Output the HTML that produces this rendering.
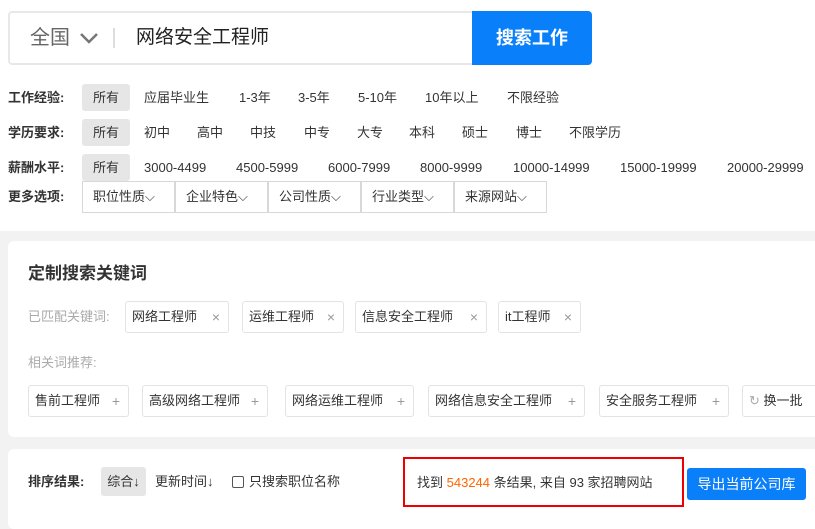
<!DOCTYPE html>
<html><head><meta charset="utf-8"><style>
*{margin:0;padding:0;box-sizing:border-box}
body{width:815px;height:511px;overflow:hidden;background:#f2f2f2;font-family:"Liberation Sans","Noto Sans CJK SC",sans-serif;position:relative;color:#333;line-height:16px}
.a{position:absolute;white-space:nowrap}
.top{position:absolute;left:0;top:0;width:815px;height:231px;background:#fff}
.lbl{font-size:13px;font-weight:bold;color:#333}
.o{font-size:13px;color:#333}
.chip{position:absolute;background:#e6e6e6;border-radius:3px;font-size:13px;color:#333;text-align:center}
.card{position:absolute;background:#fff;border-radius:6px}
.tag{position:absolute;border:1px solid #e3e3e3;border-radius:3px;font-size:13px;color:#333;height:32px;line-height:30px;padding-left:6px;background:#fff}
.tag i{font-style:normal;color:#999;position:absolute;right:8px;top:0;font-size:14px}
.dd{position:absolute;top:181px;height:32px;width:93px;border:1px solid #d8d8d8;font-size:13px;line-height:30px;padding-left:10px;color:#333}
</style></head><body>
<div class="top"></div>
<div class="a" style="left:8px;top:11px;width:466px;height:54px;border:2px solid #e8e8e8;border-right:none;border-radius:4px 0 0 4px;background:#fff"></div>
<div class="a" style="left:30px;top:24px;font-size:20px;line-height:28px;color:#666">全国</div>
<svg class="a" style="left:79px;top:32px" width="20" height="12"><path d="M2 2 L10 10 L18 2" stroke="#777" stroke-width="2.5" fill="none"/></svg>
<div class="a" style="left:113px;top:28px;width:2px;height:20px;background:#ddd"></div>
<div class="a" style="left:136px;top:24px;font-size:19px;line-height:28px;color:#222">网络安全工程师</div>
<div class="a" style="left:472px;top:11px;width:120px;height:54px;background:#0a7ffa;border-radius:0 4px 4px 0;color:#fff;font-size:18px;font-weight:bold;text-align:center;line-height:54px">搜索工作</div>

<div class="a lbl" style="left:8px;top:90px">工作经验:</div>
<div class="chip" style="left:82px;top:84px;width:48px;height:27px;line-height:27px">所有</div>
<div class="a o" style="left:144px;top:90px">应届毕业生</div>
<div class="a o" style="left:239px;top:90px">1-3年</div>
<div class="a o" style="left:298px;top:90px">3-5年</div>
<div class="a o" style="left:358px;top:90px">5-10年</div>
<div class="a o" style="left:425px;top:90px">10年以上</div>
<div class="a o" style="left:507px;top:90px">不限经验</div>

<div class="a lbl" style="left:8px;top:125px">学历要求:</div>
<div class="chip" style="left:82px;top:119px;width:48px;height:27px;line-height:27px">所有</div>
<div class="a o" style="left:144px;top:125px">初中</div>
<div class="a o" style="left:197px;top:125px">高中</div>
<div class="a o" style="left:250px;top:125px">中技</div>
<div class="a o" style="left:304px;top:125px">中专</div>
<div class="a o" style="left:357px;top:125px">大专</div>
<div class="a o" style="left:409px;top:125px">本科</div>
<div class="a o" style="left:462px;top:125px">硕士</div>
<div class="a o" style="left:516px;top:125px">博士</div>
<div class="a o" style="left:569px;top:125px">不限学历</div>

<div class="a lbl" style="left:8px;top:160px">薪酬水平:</div>
<div class="chip" style="left:82px;top:154px;width:48px;height:27px;line-height:27px">所有</div>
<div class="a o" style="left:144px;top:160px">3000-4499</div>
<div class="a o" style="left:236px;top:160px">4500-5999</div>
<div class="a o" style="left:328px;top:160px">6000-7999</div>
<div class="a o" style="left:420px;top:160px">8000-9999</div>
<div class="a o" style="left:513px;top:160px">10000-14999</div>
<div class="a o" style="left:620px;top:160px">15000-19999</div>
<div class="a o" style="left:727px;top:160px">20000-29999</div>

<div class="a lbl" style="left:8px;top:189px">更多选项:</div>
<div class="dd" style="left:82px">职位性质⌵</div>
<div class="dd" style="left:175px">企业特色⌵</div>
<div class="dd" style="left:268px">公司性质⌵</div>
<div class="dd" style="left:361px">行业类型⌵</div>
<div class="dd" style="left:454px">来源网站⌵</div>

<div class="card" style="left:8px;top:241px;width:820px;height:196px"></div>
<div class="a" style="left:28px;top:264px;font-size:17px;line-height:20px;font-weight:bold;color:#333">定制搜索关键词</div>
<div class="a" style="left:28px;top:309px;font-size:13px;color:#aaa">已匹配关键词:</div>
<div class="tag" style="left:125px;top:301px;width:104px">网络工程师<i>×</i></div>
<div class="tag" style="left:242px;top:301px;width:102px">运维工程师<i>×</i></div>
<div class="tag" style="left:355px;top:301px;width:132px">信息安全工程师<i>×</i></div>
<div class="tag" style="left:498px;top:301px;width:83px">it工程师<i>×</i></div>
<div class="a" style="left:28px;top:355px;font-size:13px;color:#aaa">相关词推荐:</div>
<div class="tag" style="left:28px;top:385px;width:101px">售前工程师<i>+</i></div>
<div class="tag" style="left:142px;top:385px;width:126px">高级网络工程师<i>+</i></div>
<div class="tag" style="left:285px;top:385px;width:129px">网络运维工程师<i>+</i></div>
<div class="tag" style="left:428px;top:385px;width:157px">网络信息安全工程师<i>+</i></div>
<div class="tag" style="left:599px;top:385px;width:130px">安全服务工程师<i>+</i></div>
<div class="tag" style="left:742px;top:385px;width:90px"><span style="color:#aaa">↻</span> 换一批</div>

<div class="card" style="left:8px;top:449px;width:820px;height:80px"></div>
<div class="a lbl" style="left:28px;top:474px">排序结果:</div>
<div class="chip" style="left:101px;top:467px;width:45px;height:29px;line-height:29px">综合↓</div>
<div class="a o" style="left:155px;top:474px">更新时间↓</div>
<div class="a" style="left:232px;top:476px;width:12px;height:12px;border:1px solid #555;border-radius:2px"></div>
<div class="a o" style="left:249px;top:474px">只搜索职位名称</div>
<div class="a" style="left:403px;top:457px;width:281px;height:50px;border:2px solid #e00"></div>
<div class="a o" style="left:417px;top:475px">找到 <span style="color:#f60">543244</span> 条结果, 来自 93 家招聘网站</div>
<div class="a" style="left:687px;top:468px;width:119px;height:32px;background:#0a7ffa;border-radius:3px;color:#fff;font-size:14px;text-align:center;line-height:32px">导出当前公司库</div>
</body></html>
